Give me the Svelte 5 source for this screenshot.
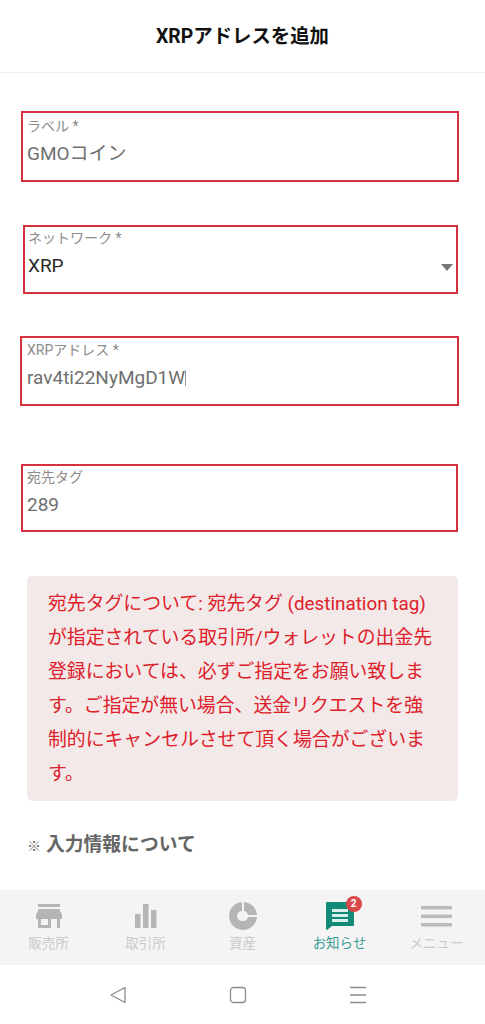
<script>
	const tabs = [
		{ id: 'shop', label: '販売所' },
		{ id: 'exchange', label: '取引所' },
		{ id: 'assets', label: '資産' },
		{ id: 'news', label: 'お知らせ', active: true, badge: 2 },
		{ id: 'menu', label: 'メニュー' }
	];
</script>

<div class="page">
	<header class="header">XRPアドレスを追加</header>

	<main class="form">
		<div class="field field-label">
			<span class="field-name">ラベル *</span>
			<span class="field-value">GMOコイン</span>
		</div>
		<div class="field field-network">
			<span class="field-name">ネットワーク *</span>
			<span class="field-value dark">XRP</span>
			<span class="caret"></span>
		</div>
		<div class="field field-address">
			<span class="field-name">XRPアドレス *</span>
			<span class="field-value">rav4ti22NyMgD1W<i class="cursor"></i></span>
		</div>
		<div class="field field-tag">
			<span class="field-name">宛先タグ</span>
			<span class="field-value">289</span>
		</div>

		<p class="alert">宛先タグについて: 宛先タグ (destination tag) が指定されている取引所/ウォレットの出金先登録においては、必ずご指定をお願い致します。ご指定が無い場合、送金リクエストを強制的にキャンセルさせて頂く場合がございます。</p>

		<h2 class="info"><span class="info-mark">※</span>入力情報について</h2>
	</main>

	<nav class="tabs">
		{#each tabs as tab}
			<div class="tab" class:active={tab.active}>
				<span class="tab-icon">
					{#if tab.id === 'shop'}
						<svg width="26" height="24" viewBox="0 0 26 24" fill="#b5b5b5">
							<rect x="2" y="0" width="22" height="3"/>
							<path d="M2.500 5h21L26 11v4H0v-4z"/>
							<path d="M2 15h3v9H2zM21 15h3v9h-3zM2 21h13v3H2zM12 15h3v7h-3z"/>
						</svg>
					{:else if tab.id === 'exchange'}
						<svg width="22" height="24" viewBox="0 0 22 24" fill="#b5b5b5">
							<rect x="0" y="10" width="5.500" height="14"/>
							<rect x="8" y="0" width="5.500" height="24"/>
							<rect x="16" y="6" width="5.500" height="18"/>
						</svg>
					{:else if tab.id === 'assets'}
						<svg width="28" height="28" viewBox="0 0 28 28" fill="#b5b5b5">
							<path d="M13 0v9a5 5 0 0 0 0 10h1a5 5 0 0 0 5-4h9A14 14 0 1 1 13 0z"/>
							<path d="M15 0A14 14 0 0 1 28 13h-9a5 5 0 0 0-4-4z"/>
						</svg>
					{:else if tab.id === 'news'}
						<svg width="28" height="28" viewBox="0 0 28 28">
							<path d="M1 0h26a1 1 0 0 1 1 1v22a1 1 0 0 1-1 1H6l-5 4H1a1 1 0 0 1-1-1V1a1 1 0 0 1 1-1z" fill="#128a78"/>
							<path d="M6 7h16v3H6zM6 12h16v3H6zM6 17h16v3H6z" fill="#d9efeb"/>
						</svg>
						<span class="badge">{tab.badge}</span>
					{:else}
						<svg width="31" height="21" viewBox="0 0 31 21" fill="#bbbbbb">
							<rect width="31" height="3.500"/>
							<rect y="8.500" width="31" height="3.500"/>
							<rect y="17" width="31" height="3.500"/>
						</svg>
					{/if}
				</span>
				<span class="tab-label">{tab.label}</span>
			</div>
		{/each}
	</nav>

	<div class="system-nav">
		<svg width="18" height="18" viewBox="0 0 18 18" fill="none" stroke="#8c8c8c" stroke-width="1.300">
			<path d="M16 1.500v15L2 9z" stroke-linejoin="round"/>
		</svg>
		<svg width="18" height="18" viewBox="0 0 18 18" fill="none" stroke="#8c8c8c" stroke-width="1.300">
			<rect x="1.500" y="1.500" width="15" height="15" rx="3"/>
		</svg>
		<svg width="18" height="18" viewBox="0 0 18 18" fill="none" stroke="#8c8c8c" stroke-width="1.300">
			<path d="M1 1.500h16M1 9h16M1 16.500h16"/>
		</svg>
	</div>
</div>

<style>
	:global(body) {
		margin: 0;
		background: #fff;
	}

	.page {
		width: 485px;
		height: 1024px;
		display: flex;
		flex-direction: column;
		overflow: hidden;
		font-family: Roboto, "Noto Sans CJK JP", sans-serif;
	}

	.header {
		height: 73px;
		flex: none;
		box-sizing: border-box;
		display: flex;
		align-items: center;
		justify-content: center;
		padding-bottom: 3px;
		border-bottom: 1px solid #eeeeee;
		font-size: 19.400px;
		font-weight: 700;
		color: #111;
	}

	.form {
		flex: 1;
		min-height: 0;
		overflow: hidden;
		padding-top: 38px;
	}

	.field {
		position: relative;
		box-sizing: border-box;
		border: 2px solid #d8303c;
		padding: 5px 4px 0;
		display: flex;
		flex-direction: column;
	}

	.field-label {
		width: 438px;
		height: 71px;
		margin-left: 21px;
	}

	.field-network {
		width: 435px;
		height: 69px;
		margin: 43px 0 0 23px;
	}

	.field-network .field-name {
		margin-top: -2px;
	}

	.field-network .field-name,
	.field-network .field-value {
		margin-left: -1px;
	}

	.field-address {
		width: 439px;
		height: 70px;
		margin: 42px 0 0 20px;
	}

	.field-address .field-name {
		margin-top: -1px;
	}

	.field-address .field-name,
	.field-address .field-value {
		margin-left: 1px;
	}

	.field-tag {
		width: 437px;
		height: 68px;
		margin: 58px 0 0 21px;
	}

	.field-tag .field-name {
		margin-top: -2px;
	}

	.field-name {
		font-size: 14px;
		line-height: 16px;
		color: #8c8c8c;
	}

	.field-value {
		margin-top: 8px;
		font-size: 19px;
		line-height: 24px;
		color: #6f6f6f;
	}

	.field-value.dark {
		color: #2a2a2a;
	}

	.cursor {
		display: inline-block;
		width: 1px;
		height: 16px;
		background: #999;
		vertical-align: -2px;
	}

	.caret {
		position: absolute;
		right: 3px;
		top: 37px;
		border-style: solid;
		border-width: 7px 6.500px 0;
		border-color: #777 transparent transparent;
	}

	.alert {
		margin: 44px 27px 0;
		padding: 11px 23px 9px 21px;
		border-radius: 5px;
		background: #f4e9e9;
		color: #dd2029;
		font-size: 18.850px;
		line-height: 34.100px;
	}

	.info {
		margin: 30px 0 0 27px;
		font-size: 18.800px;
		line-height: 28px;
		font-weight: 700;
		color: #666;
	}

	.info-mark {
		display: inline-block;
		width: 19px;
		font-size: 14px;
	}

	.tabs {
		height: 75px;
		flex: none;
		display: grid;
		grid-template-columns: repeat(5, 1fr);
		background: #f4f4f4;
	}

	.tab {
		display: flex;
		flex-direction: column;
		align-items: center;
		padding-top: 12px;
	}

	.tab-icon {
		position: relative;
		height: 28px;
		display: flex;
		align-items: center;
		justify-content: center;
	}

	.tab-label {
		margin-top: 3px;
		font-size: 13.500px;
		line-height: 20px;
		color: #cbcbcb;
	}

	.tab.active .tab-label {
		color: #3c9c94;
	}

	.badge {
		position: absolute;
		top: -6px;
		right: -8px;
		width: 16px;
		height: 16px;
		border-radius: 50%;
		background: #d9494a;
		color: #fff;
		font-size: 10px;
		font-weight: 700;
		line-height: 16px;
		text-align: center;
	}

	.system-nav {
		height: 59px;
		flex: none;
		display: flex;
		align-items: center;
		justify-content: center;
		gap: 102px;
		padding: 1px 10px 0 0;
		box-sizing: border-box;
	}
</style>
